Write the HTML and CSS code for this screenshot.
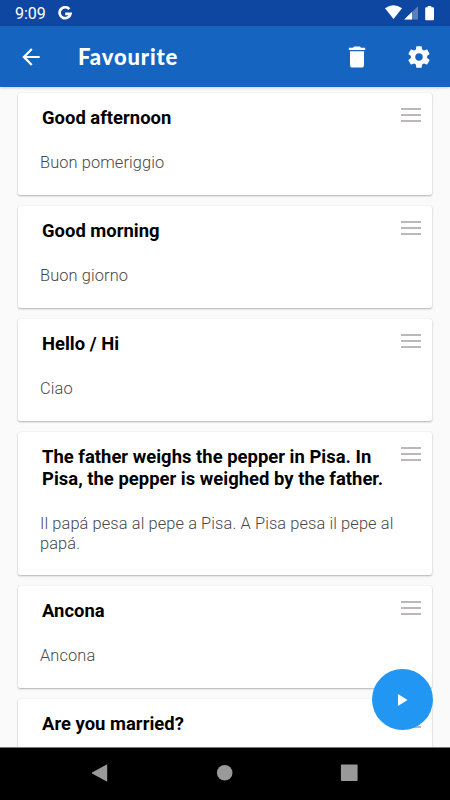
FILE: index.html
```html
<!DOCTYPE html>
<html lang="en">
<head>
<meta charset="utf-8">
<title>Favourite</title>
<link rel="stylesheet" href="styles.css">
</head>
<body>
<div class="screen">
  <div class="status">
    <span class="time">9:09</span>
    <svg class="google" width="14" height="14" viewBox="0 0 14 14"><path d="M11.3 3.1A5.5 5.5 0 1 0 12.5 7.9H7.2" fill="none" stroke="#fff" stroke-width="2.7"/></svg>
    <svg class="indicators" width="52" height="16" viewBox="0 0 52 16"><path d="M0 3.3Q8.5-2.7 17 3.3L8.5 14Z" fill="#fff"/><path d="M33 1.2V14.6H19.2Z" fill="#5a80bf"/><path d="M27 7.1V14.6H19.2Z" fill="#fff"/><path d="M42.7 1h3.6v1.3H48q1 0 1 1V14q0 1.2-1 1.2h-6.8q-1 0-1-1.2V3.3q0-1 1-1h1.5Z" fill="#fff"/></svg>
  </div>
  <header class="toolbar">
    <svg class="back" width="26" height="26" viewBox="0 0 24 24"><path d="M20 11H7.83l5.59-5.59L12 4l-8 8 8 8 1.41-1.41L7.83 13H20v-2z" fill="#fff"/></svg>
    <h1>Favourite</h1>
    <svg class="trash" width="28" height="28" viewBox="0 0 24 24"><path d="M6 19c0 1.1.9 2 2 2h8c1.1 0 2-.9 2-2V7H6v12zM19 4h-3.5l-1-1h-5l-1 1H5v2h14V4z" fill="#fff"/></svg>
    <svg class="gear" width="26" height="26" viewBox="0 0 24 24"><path d="M19.43 12.98c.04-.32.07-.64.07-.98s-.03-.66-.07-.98l2.11-1.65c.19-.15.24-.42.12-.64l-2-3.46c-.12-.22-.39-.3-.61-.22l-2.49 1c-.52-.4-1.08-.73-1.69-.98l-.38-2.65C14.46 2.18 14.25 2 14 2h-4c-.25 0-.46.18-.49.42l-.38 2.65c-.61.25-1.17.59-1.69.98l-2.49-1c-.23-.09-.49 0-.61.22l-2 3.46c-.13.22-.07.49.12.64l2.11 1.65c-.04.32-.07.65-.07.98s.03.66.07.98l-2.11 1.65c-.19.15-.24.42-.12.64l2 3.46c.12.22.39.3.61.22l2.49-1c.52.4 1.08.73 1.69.98l.38 2.65c.03.24.24.42.49.42h4c.25 0 .46-.18.49-.42l.38-2.65c.61-.25 1.17-.59 1.69-.98l2.49 1c.23.09.49 0 .61-.22l2-3.46c.12-.22.07-.49-.12-.64l-2.11-1.65zM12 15.5c-1.93 0-3.5-1.57-3.5-3.5s1.57-3.5 3.5-3.5 3.5 1.57 3.5 3.5-1.57 3.5-3.5 3.5z" fill="#fff"/></svg>
  </header>
  <main class="list">
    <article class="card"><div class="text"><h2>Good afternoon</h2><p>Buon pomeriggio</p></div><div class="handle"></div></article>
    <article class="card"><div class="text"><h2>Good morning</h2><p>Buon giorno</p></div><div class="handle"></div></article>
    <article class="card"><div class="text"><h2>Hello / Hi</h2><p>Ciao</p></div><div class="handle"></div></article>
    <article class="card"><div class="text"><h2>The father weighs the pepper in Pisa. In<br>Pisa, the pepper is weighed by the father.</h2><p>Il papá pesa al pepe a Pisa. A Pisa pesa il pepe al<br>papá.</p></div><div class="handle"></div></article>
    <article class="card"><div class="text"><h2>Ancona</h2><p>Ancona</p></div><div class="handle"></div></article>
    <article class="card"><div class="text"><h2>Are you married?</h2></div><div class="handle"></div></article>
  </main>
  <nav class="navbar">
    <svg width="18" height="18" viewBox="0 0 18 18"><path d="M15 .3V17.7L-.2 9.4Q-.7 9-.2 8.6Z" fill="#999" transform="translate(.2)"/></svg>
    <svg width="18" height="18" viewBox="0 0 18 18"><circle cx="8.7" cy="8.7" r="7.8" fill="#999"/></svg>
    <svg width="18" height="18" viewBox="0 0 18 18"><rect x=".9" y=".5" width="16.7" height="16.5" rx="1" fill="#999"/></svg>
  </nav>
  <button class="fab" aria-label="Play"><svg width="10" height="12" viewBox="0 0 10 12"><path d="M0 0L9.5 6L0 12Z" fill="#fff"/></svg></button>
</div>
</body>
</html>
```
FILE: styles.css
```css
* { box-sizing: border-box; }
body { margin: 0; font-family: Roboto, sans-serif; }
h1, h2, p { margin: 0; }
svg { display: block; flex: none; }
.screen {
  position: relative;
  display: flex;
  flex-direction: column;
  width: 450px;
  height: 800px;
  overflow: hidden;
  background: #fafafa;
}
.status {
  flex: none;
  display: flex;
  height: 26px;
  padding: 0 14px 0 15px;
  background: #0d47a1;
  color: #fff;
}
.time { width: 43px; font-size: 16px; line-height: 28px; }
.google { margin-top: 6px; }
.indicators { margin: 5px -1px 0 auto; }
.toolbar {
  position: relative;
  z-index: 1;
  flex: none;
  display: flex;
  align-items: center;
  height: 61px;
  padding: 0 18px;
  background: #1565c0;
  color: #fff;
  box-shadow: 0 1px 3px rgba(0, 0, 0, .18);
}
.toolbar h1 {
  flex: 1;
  margin-left: 34px;
  font: 900 22px/28px Lato, sans-serif;
  letter-spacing: .85px;
}
.gear { margin-left: 35px; }
.list {
  flex: 1;
  min-height: 0;
  display: flex;
  flex-direction: column;
  gap: 11px;
  padding: 6px 18px 0;
  overflow: hidden;
}
.card {
  flex: none;
  display: flex;
  justify-content: space-between;
  min-height: 102px;
  padding: 14px 11px 21.8px 22px;
  border-radius: 2px;
  background: #fff;
  box-shadow: 0 1px 2px rgba(0, 0, 0, .28), 0 0 1px rgba(0, 0, 0, .12);
}
.card h2 {
  padding-left: 2px;
  color: #000;
  font-size: 18.4px;
  font-weight: 700;
  line-height: 22px;
  letter-spacing: .03px;
  white-space: nowrap;
}
.card p {
  margin-top: 24px;
  color: #484848;
  font-size: 16.4px;
  font-weight: 300;
  line-height: 19.6px;
  letter-spacing: .1px;
  white-space: nowrap;
}
.handle {
  flex: none;
  width: 20px;
  height: 14px;
  margin-top: 1px;
  border: solid #bdb7b9;
  border-width: 2px 0;
  background: linear-gradient(#bdb7b9, #bdb7b9) center / 100% 2px no-repeat;
}
.navbar {
  position: relative;
  flex: none;
  display: flex;
  justify-content: center;
  gap: 106px;
  height: 53px;
  padding: 16px 1px 0 0;
  border-top: 1px solid #777;
  background: #000;
}
.fab {
  position: absolute;
  right: 17.5px;
  bottom: 70px;
  display: flex;
  align-items: center;
  justify-content: center;
  width: 61px;
  height: 61px;
  padding: 0 0 0 2px;
  border: 0;
  border-radius: 50%;
  background: #2196f3;
}
```
